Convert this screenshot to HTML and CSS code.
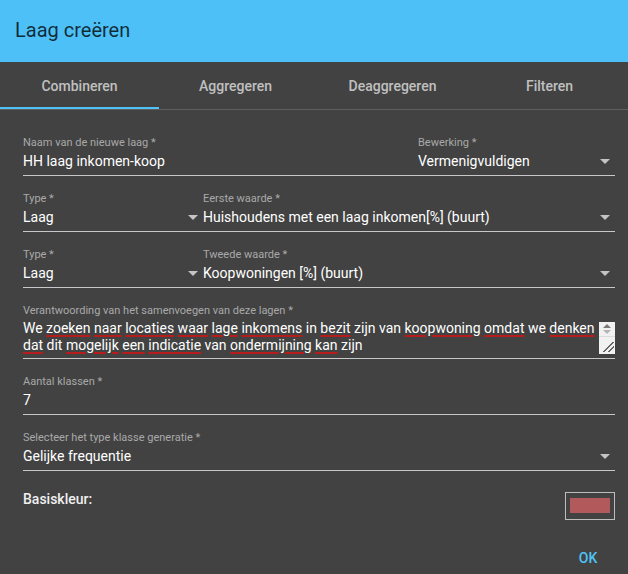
FILE: index.html
```html
<!DOCTYPE html>
<html lang="nl">
<head>
<meta charset="utf-8">
<title>Laag creëren</title>
<link rel="stylesheet" href="styles.css">
</head>
<body>
<div class="dialog">
  <header class="header">Laag creëren</header>
  <nav class="tabs">
    <div class="tab active">Combineren</div>
    <div class="tab">Aggregeren</div>
    <div class="tab">Deaggregeren</div>
    <div class="tab">Filteren</div>
  </nav>
  <main class="content">
    <div class="row row-name">
      <div class="field">
        <div class="label">Naam van de nieuwe laag *</div>
        <div class="value">HH laag inkomen-koop</div>
      </div>
      <div class="field">
        <div class="label">Bewerking *</div>
        <div class="value select"><span>Vermenigvuldigen</span><i class="arrow"></i></div>
      </div>
    </div>

    <div class="row row-type">
      <div class="field">
        <div class="label">Type *</div>
        <div class="value select"><span>Laag</span><i class="arrow"></i></div>
      </div>
      <div class="field">
        <div class="label">Eerste waarde *</div>
        <div class="value select"><span>Huishoudens met een laag inkomen[%] (buurt)</span><i class="arrow"></i></div>
      </div>
    </div>

    <div class="row row-type">
      <div class="field">
        <div class="label">Type *</div>
        <div class="value select"><span>Laag</span><i class="arrow"></i></div>
      </div>
      <div class="field">
        <div class="label">Tweede waarde *</div>
        <div class="value select"><span>Koopwoningen [%] (buurt)</span><i class="arrow"></i></div>
      </div>
    </div>

    <div class="row">
      <div class="field">
        <div class="label">Verantwoording van het samenvoegen van deze lagen *</div>
        <div class="textarea">
          <div class="ta-text">We <u>zoeken</u> <u>naar</u> <u>locaties</u> <u>waar</u> <u>lage</u> <u>inkomens</u> in <u>bezit</u> zijn van <u>koopwoning</u> <u>omdat</u> we <u>denken</u><br><u>dat</u> dit <u>mogelijk</u> <u>een</u> <u>indicatie</u> van <u>ondermijning</u> <u>kan</u> zijn</div>
          <div class="ta-scroll">
            <div class="spin"><span class="up"></span><span class="down"></span></div>
            <div class="grip"></div>
          </div>
        </div>
      </div>
    </div>

    <div class="row">
      <div class="field">
        <div class="label">Aantal klassen *</div>
        <div class="value">7</div>
      </div>
    </div>

    <div class="row">
      <div class="field">
        <div class="label">Selecteer het type klasse generatie *</div>
        <div class="value select"><span>Gelijke frequentie</span><i class="arrow"></i></div>
      </div>
    </div>

    <div class="color-row">
      <div class="color-label">Basiskleur:</div>
      <div class="swatch"><div class="swatch-fill"></div></div>
    </div>
  </main>
  <footer class="actions">
    <div class="btn">OK</div>
  </footer>
</div>
</body>
</html>
```

FILE: styles.css
```css
* { box-sizing: border-box; }
html, body {
  margin: 0;
  padding: 0;
  background: #424242;
  font-family: Roboto, "Liberation Sans", sans-serif;
}
.dialog {
  width: 628px;
  height: 574px;
  background: #424242;
  display: flex;
  flex-direction: column;
}
.header {
  height: 62px;
  background: #4dc1f7;
  color: rgba(0, 0, 0, 0.78);
  font-size: 20px;
  padding-left: 15px;
  padding-bottom: 2px;
  display: flex;
  align-items: center;
}
.tabs {
  display: grid;
  grid-template-columns: repeat(4, 1fr);
  height: 48px;
  border-bottom: 1px solid #5e5e5e;
}
.tab {
  display: flex;
  align-items: center;
  justify-content: center;
  color: #c0c0c0;
  font-size: 14px;
  font-weight: 500;
  padding-top: 1px;
}
.tab.active {
  box-shadow: inset 0 -2px 0 #4fc3f7;
  margin-right: -2px;
}
.content {
  padding: 26px 13px 0 23px;
  display: flex;
  flex-direction: column;
}
.row {
  display: flex;
  border-bottom: 1px solid #c8c8c8;
  margin-bottom: 16px;
}
.row-name .field:first-child { width: 395px; }
.row-type .field:first-child { width: 180px; }
.field {
  flex: 1 1 auto;
  display: flex;
  flex-direction: column;
  padding-bottom: 4px;
}
.row-name .field:first-child,
.row-type .field:first-child { flex: 0 0 auto; }
.label {
  font-size: 11px;
  line-height: 14px;
  color: #a9a9a9;
}
.value {
  margin-top: 1px;
  font-size: 14px;
  line-height: 20px;
  color: #ffffff;
}
.select {
  display: flex;
  justify-content: space-between;
  align-items: center;
}
.arrow {
  width: 0;
  height: 0;
  border-left: 5px solid transparent;
  border-right: 5px solid transparent;
  border-top: 5px solid #c4c4c4;
  margin-right: 5px;
}
.textarea {
  margin-top: 2px;
  display: flex;
  justify-content: space-between;
}
.ta-text {
  font-size: 14px;
  line-height: 17px;
  color: #ffffff;
  white-space: nowrap;
}
.ta-text u {
  text-decoration: underline #b71c1c;
  text-decoration-thickness: 2px;
  text-underline-offset: 2px;
}
.ta-scroll {
  width: 16px;
  height: 32px;
  margin-top: 2px;
  background: #f1f1f1;
  display: flex;
  flex-direction: column;
  justify-content: space-between;
}
.spin {
  height: 15px;
  display: flex;
  flex-direction: column;
  align-items: center;
  justify-content: center;
  gap: 2px;
  border-bottom: 1px solid #dcdcdc;
}
.spin .up {
  width: 0; height: 0;
  border-left: 4px solid transparent;
  border-right: 4px solid transparent;
  border-bottom: 4px solid #7a7a7a;
}
.spin .down {
  width: 0; height: 0;
  border-left: 4px solid transparent;
  border-right: 4px solid transparent;
  border-top: 4px solid #b5b5b5;
}
.grip {
  height: 10px;
  margin: 0 1px 2px 4px;
  background: linear-gradient(135deg, transparent 45%, #666 46%, #666 54%, transparent 55%, transparent 70%, #666 71%, #666 79%, transparent 80%);
}
.color-row {
  display: flex;
  justify-content: space-between;
  align-items: flex-start;
  margin-top: 2px;
}
.color-label {
  font-size: 14px;
  line-height: 20px;
  color: #f0f0f0;
  font-weight: 500;
}
.swatch {
  width: 50px;
  height: 28px;
  margin-top: 3px;
  border: 1px solid #bdbdbd;
  padding: 5px 4px 0 4px;
}
.swatch-fill {
  width: 40px;
  height: 15px;
  background: #b2595b;
}
.actions {
  margin-top: auto;
  display: flex;
  justify-content: flex-end;
  padding: 0 8px 0 0;
}
.btn {
  min-width: 64px;
  height: 32px;
  display: flex;
  align-items: center;
  justify-content: center;
  color: #4fc3f7;
  font-size: 14px;
  font-weight: 500;
}
```
